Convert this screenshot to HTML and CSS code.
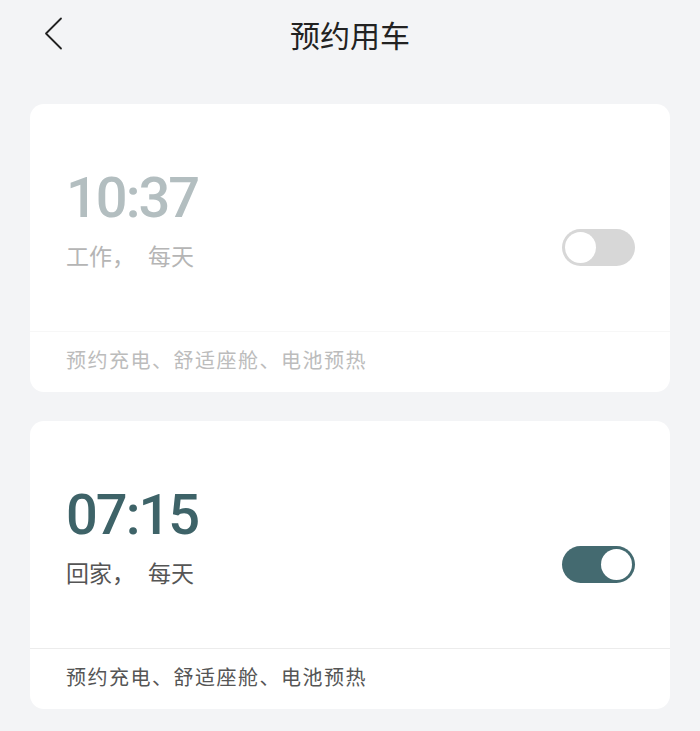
FILE: index.html
```html
<!DOCTYPE html>
<html lang="zh-CN">
<head>
<meta charset="UTF-8">
<meta name="viewport" content="width=device-width, initial-scale=1.0">
<title>预约用车</title>
<link rel="stylesheet" href="styles.css">
</head>
<body>
<header class="topbar">
    <a class="back" href="#">
        <svg width="20" height="34" viewBox="0 0 20 34">
            <polyline points="17,1.5 2,16.5 17,31.5" fill="none" stroke="#222" stroke-width="1.8" stroke-linecap="round" stroke-linejoin="round"/>
        </svg>
    </a>
    <h1 class="title">预约用车</h1>
    <span></span>
</header>

<main class="list">
    <div class="card off">
        <div class="card-main">
            <div class="info">
                <div class="time">10:37</div>
                <div class="repeat">工作，<span class="days">每天</span></div>
            </div>
            <span class="switch"><span class="knob"></span></span>
        </div>
        <div class="card-foot">预约充电、舒适座舱、电池预热</div>
    </div>

    <div class="card on">
        <div class="card-main">
            <div class="info">
                <div class="time">07:15</div>
                <div class="repeat">回家，<span class="days">每天</span></div>
            </div>
            <span class="switch"><span class="knob"></span></span>
        </div>
        <div class="card-foot">预约充电、舒适座舱、电池预热</div>
    </div>
</main>
</body>
</html>
```

FILE: styles.css
```css
body {
    margin: 0;
    background-color: #f3f4f6;
    font-family: "Noto Sans CJK SC", "Noto Sans", sans-serif;
}

.topbar {
    display: grid;
    grid-template-columns: 1fr auto 1fr;
    align-items: center;
    height: 68px;
    padding: 0 44px;
}

.back {
    display: flex;
    width: 20px;
    height: 34px;
}

.title {
    margin: 0;
    font-size: 30px;
    font-weight: 400;
    line-height: 1;
    color: #222;
}

.list {
    display: flex;
    flex-direction: column;
    gap: 29px;
    padding: 36px 30px 0;
}

.card {
    background-color: #fff;
    border-radius: 14px;
    overflow: hidden;
}

.card-main {
    display: flex;
    justify-content: space-between;
    align-items: flex-start;
    box-sizing: border-box;
    height: 227px;
    padding: 66px 35px 0 36px;
}

.time {
    font-family: Roboto, "Liberation Sans", sans-serif;
    font-size: 56px;
    font-weight: 500;
    line-height: 1;
    letter-spacing: -2px;
}

.repeat {
    margin-top: 18px;
    font-size: 23px;
    line-height: 1;
}

.days {
    margin-left: 13px;
}

.card-foot {
    border-top: 1px solid #ececec;
    padding: 18px 36px 22px;
    font-size: 20px;
    line-height: 1;
    letter-spacing: 1.5px;
}

.switch {
    display: flex;
    align-items: center;
    box-sizing: border-box;
    width: 73px;
    height: 37px;
    margin-top: 59px;
    padding: 0 3px;
    border-radius: 19px;
}

.knob {
    width: 31px;
    height: 31px;
    border-radius: 50%;
    background-color: #fff;
}

/* disabled card */
.off .time { color: #b3bec0; }
.off .repeat { color: #b5b5b5; }
.off .card-foot { color: #bcbcbc; border-top-color: #f7f7f7; }
.off .switch { background-color: #d7d7d7; }

/* enabled card */
.on .time { color: #3e6368; }
.on .repeat { color: #555; }
.on .card-foot { color: #555; }
.on .switch { background-color: #446a70; justify-content: flex-end; }
```
